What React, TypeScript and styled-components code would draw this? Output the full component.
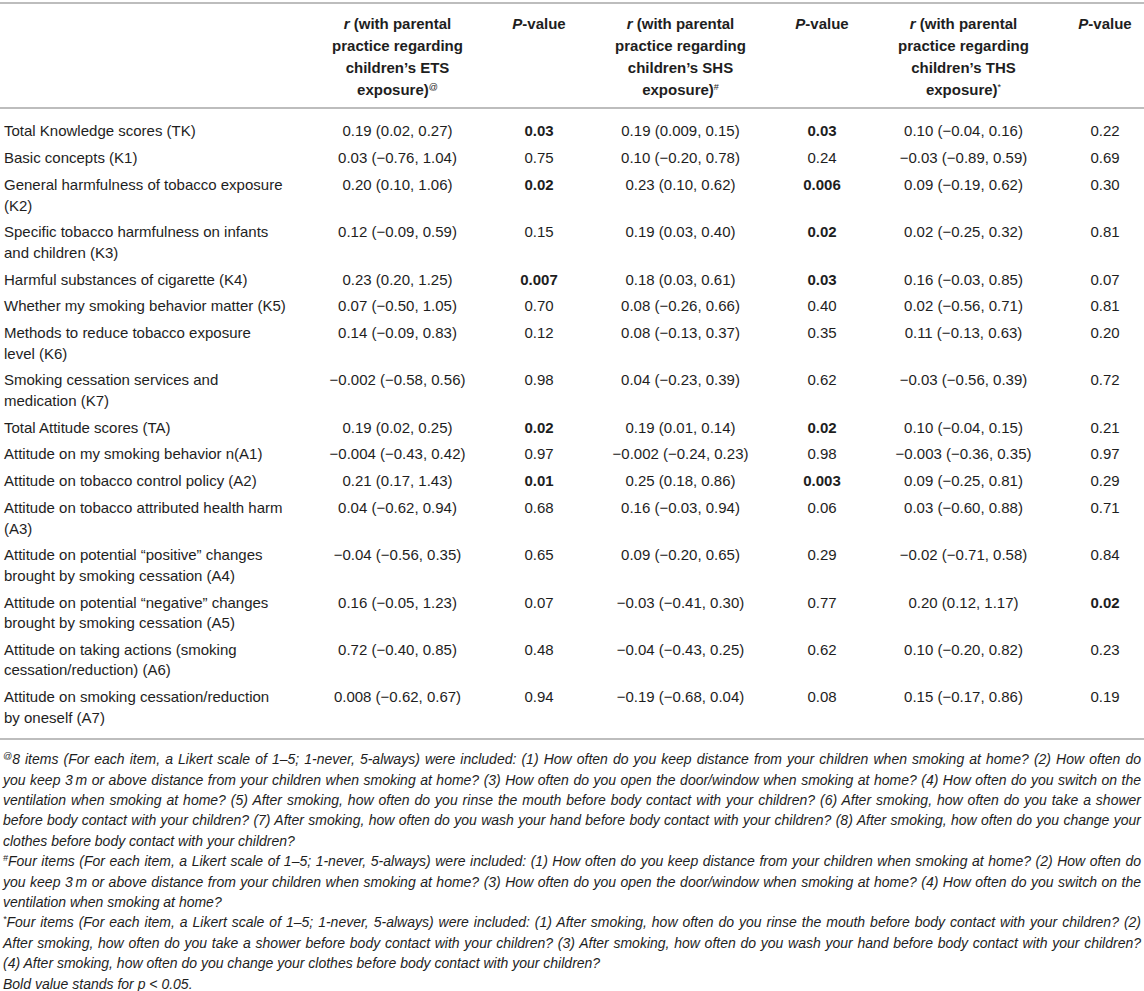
import React from "react";
import styled, { createGlobalStyle } from "styled-components";

const Global = createGlobalStyle`
  html, body { margin: 0; padding: 0; background: #fff; }
  body { font-family: "Liberation Sans", Arial, Helvetica, sans-serif; }
`;

const Page = styled.div`
  width: 1144px;
  padding-top: 2px;
  color: #1e1e1e;
  font-family: "Liberation Sans", Arial, Helvetica, sans-serif;
`;

const Table = styled.div`
  border-top: 2px solid #bdbdbd;
`;

const Row = styled.div<{ $head?: boolean }>`
  display: grid;
  grid-template-columns: 295px repeat(3, 205px 78px);
  border-bottom: ${(p) => (p.$head ? "2px solid #bdbdbd" : "none")};
`;

const HeadCell = styled.div`
  font-size: 15px;
  font-weight: 700;
  line-height: 22px;
  padding: 9px 0 6px;
  text-align: center;
`;

const Cell = styled.div<{ $label?: boolean; $first?: boolean; $last?: boolean }>`
  font-size: 15px;
  line-height: 20.5px;
  padding-top: ${(p) => (p.$first ? 12.45 : 3.15)}px;
  padding-bottom: ${(p) => (p.$last ? 10 : 3.15)}px;
  padding-left: ${(p) => (p.$label ? 4 : 0)}px;
  text-align: ${(p) => (p.$label ? "left" : "center")};
  white-space: ${(p) => (p.$label ? "normal" : "nowrap")};
`;

const Strong = styled.b`
  font-weight: 700;
`;

const Em = styled.i`
  font-style: italic;
`;

const Mark = styled.sup`
  font-size: 9px;
  line-height: 0;
  vertical-align: 5px;
  font-weight: 400;
`;

const Notes = styled.div`
  border-top: 2px solid #bdbdbd;
  padding: 9px 3px 0;
  font-size: 14px;
  line-height: 20.4px;
  font-style: italic;
`;

const NoteLine = styled.span<{ $last?: boolean }>`
  display: block;
  white-space: nowrap;
  text-align: justify;
  text-align-last: ${(p) => (p.$last ? "left" : "justify")};
`;

type Val = { v: string; b?: boolean };
type RowData = { label: string[]; cells: Val[] };

const n = (v: string, b?: boolean): Val => ({ v, b });

const rows: RowData[] = [
  { label: ["Total Knowledge scores (TK)"], cells: [n("0.19 (0.02, 0.27)"), n("0.03", true), n("0.19 (0.009, 0.15)"), n("0.03", true), n("0.10 (−0.04, 0.16)"), n("0.22")] },
  { label: ["Basic concepts (K1)"], cells: [n("0.03 (−0.76, 1.04)"), n("0.75"), n("0.10 (−0.20, 0.78)"), n("0.24"), n("−0.03 (−0.89, 0.59)"), n("0.69")] },
  { label: ["General harmfulness of tobacco exposure", "(K2)"], cells: [n("0.20 (0.10, 1.06)"), n("0.02", true), n("0.23 (0.10, 0.62)"), n("0.006", true), n("0.09 (−0.19, 0.62)"), n("0.30")] },
  { label: ["Specific tobacco harmfulness on infants", "and children (K3)"], cells: [n("0.12 (−0.09, 0.59)"), n("0.15"), n("0.19 (0.03, 0.40)"), n("0.02", true), n("0.02 (−0.25, 0.32)"), n("0.81")] },
  { label: ["Harmful substances of cigarette (K4)"], cells: [n("0.23 (0.20, 1.25)"), n("0.007", true), n("0.18 (0.03, 0.61)"), n("0.03", true), n("0.16 (−0.03, 0.85)"), n("0.07")] },
  { label: ["Whether my smoking behavior matter (K5)"], cells: [n("0.07 (−0.50, 1.05)"), n("0.70"), n("0.08 (−0.26, 0.66)"), n("0.40"), n("0.02 (−0.56, 0.71)"), n("0.81")] },
  { label: ["Methods to reduce tobacco exposure", "level (K6)"], cells: [n("0.14 (−0.09, 0.83)"), n("0.12"), n("0.08 (−0.13, 0.37)"), n("0.35"), n("0.11 (−0.13, 0.63)"), n("0.20")] },
  { label: ["Smoking cessation services and", "medication (K7)"], cells: [n("−0.002 (−0.58, 0.56)"), n("0.98"), n("0.04 (−0.23, 0.39)"), n("0.62"), n("−0.03 (−0.56, 0.39)"), n("0.72")] },
  { label: ["Total Attitude scores (TA)"], cells: [n("0.19 (0.02, 0.25)"), n("0.02", true), n("0.19 (0.01, 0.14)"), n("0.02", true), n("0.10 (−0.04, 0.15)"), n("0.21")] },
  { label: ["Attitude on my smoking behavior n(A1)"], cells: [n("−0.004 (−0.43, 0.42)"), n("0.97"), n("−0.002 (−0.24, 0.23)"), n("0.98"), n("−0.003 (−0.36, 0.35)"), n("0.97")] },
  { label: ["Attitude on tobacco control policy (A2)"], cells: [n("0.21 (0.17, 1.43)"), n("0.01", true), n("0.25 (0.18, 0.86)"), n("0.003", true), n("0.09 (−0.25, 0.81)"), n("0.29")] },
  { label: ["Attitude on tobacco attributed health harm", "(A3)"], cells: [n("0.04 (−0.62, 0.94)"), n("0.68"), n("0.16 (−0.03, 0.94)"), n("0.06"), n("0.03 (−0.60, 0.88)"), n("0.71")] },
  { label: ["Attitude on potential “positive” changes", "brought by smoking cessation (A4)"], cells: [n("−0.04 (−0.56, 0.35)"), n("0.65"), n("0.09 (−0.20, 0.65)"), n("0.29"), n("−0.02 (−0.71, 0.58)"), n("0.84")] },
  { label: ["Attitude on potential “negative” changes", "brought by smoking cessation (A5)"], cells: [n("0.16 (−0.05, 1.23)"), n("0.07"), n("−0.03 (−0.41, 0.30)"), n("0.77"), n("0.20 (0.12, 1.17)"), n("0.02", true)] },
  { label: ["Attitude on taking actions (smoking", "cessation/reduction) (A6)"], cells: [n("0.72 (−0.40, 0.85)"), n("0.48"), n("−0.04 (−0.43, 0.25)"), n("0.62"), n("0.10 (−0.20, 0.82)"), n("0.23")] },
  { label: ["Attitude on smoking cessation/reduction", "by oneself (A7)"], cells: [n("0.008 (−0.62, 0.67)"), n("0.94"), n("−0.19 (−0.68, 0.04)"), n("0.08"), n("0.15 (−0.17, 0.86)"), n("0.19")] },
];

const RHead = ({ what, mark }: { what: string; mark: string }) => (
  <HeadCell>
    <Em>r</Em> (with parental
    <br />
    practice regarding
    <br />
    children’s {what}
    <br />
    exposure)<Mark>{mark}</Mark>
  </HeadCell>
);

const PHead = () => (
  <HeadCell>
    <Em>P</Em>-value
  </HeadCell>
);

const notes: string[][] = [
  [
    "8 items (For each item, a Likert scale of 1–5; 1-never, 5-always) were included: (1) How often do you keep distance from your children when smoking at home? (2) How often do",
    "you keep 3\u2009m or above distance from your children when smoking at home? (3) How often do you open the door/window when smoking at home? (4) How often do you switch on the",
    "ventilation when smoking at home? (5) After smoking, how often do you rinse the mouth before body contact with your children? (6) After smoking, how often do you take a shower",
    "before body contact with your children? (7) After smoking, how often do you wash your hand before body contact with your children? (8) After smoking, how often do you change your",
    "clothes before body contact with your children?",
  ],
  [
    "Four items (For each item, a Likert scale of 1–5; 1-never, 5-always) were included: (1) How often do you keep distance from your children when smoking at home? (2) How often do",
    "you keep 3\u2009m or above distance from your children when smoking at home? (3) How often do you open the door/window when smoking at home? (4) How often do you switch on the",
    "ventilation when smoking at home?",
  ],
  [
    "Four items (For each item, a Likert scale of 1–5; 1-never, 5-always) were included: (1) After smoking, how often do you rinse the mouth before body contact with your children? (2)",
    "After smoking, how often do you take a shower before body contact with your children? (3) After smoking, how often do you wash your hand before body contact with your children?",
    "(4) After smoking, how often do you change your clothes before body contact with your children?",
  ],
];
const marks = ["@", "#", "*"];

export default function App() {
  return (
    <Page>
      <Global />
      <Table>
        <Row $head>
          <HeadCell />
          <RHead what="ETS" mark="@" />
          <PHead />
          <RHead what="SHS" mark="#" />
          <PHead />
          <RHead what="THS" mark="*" />
          <PHead />
        </Row>
        {rows.map((r, i) => {
          const first = i === 0;
          const last = i === rows.length - 1;
          return (
            <Row key={i}>
              <Cell $label $first={first} $last={last}>
                {r.label.map((t, j) => (
                  <React.Fragment key={j}>
                    {j > 0 && <br />}
                    {t}
                  </React.Fragment>
                ))}
              </Cell>
              {r.cells.map((c, j) => (
                <Cell key={j} $first={first} $last={last}>
                  {c.b ? <Strong>{c.v}</Strong> : c.v}
                </Cell>
              ))}
            </Row>
          );
        })}
      </Table>
      <Notes>
        {notes.map((lines, i) =>
          lines.map((l, j) => (
            <NoteLine key={`${i}-${j}`} $last={j === lines.length - 1}>
              {j === 0 && <Mark>{marks[i]}</Mark>}
              {l}
            </NoteLine>
          ))
        )}
        <NoteLine $last>
          Bold value stands for <Em>p</Em> &lt; 0.05.
        </NoteLine>
      </Notes>
    </Page>
  );
}
